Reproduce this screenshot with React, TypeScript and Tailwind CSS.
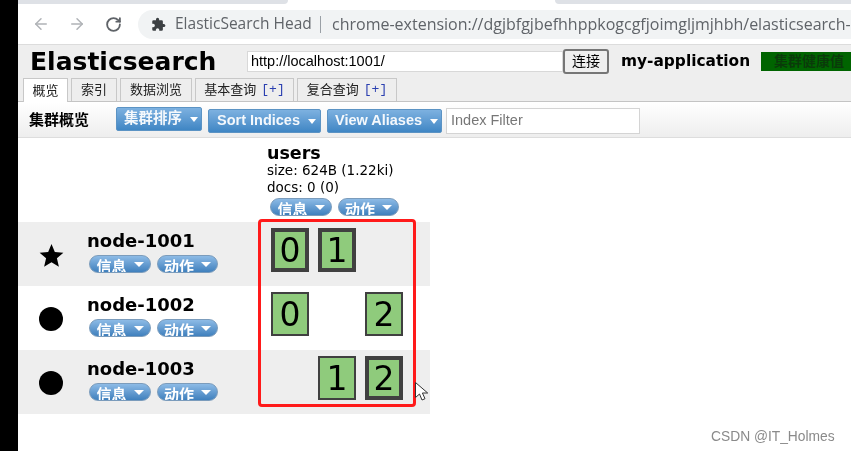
import { ArrowLeft, ArrowRight, RotateCw } from "lucide-react";

const tabs = [
  { label: "概览", w: "w-[45px]", active: true },
  { label: "索引", w: "w-[46px]" },
  { label: "数据浏览", w: "w-[72px]" },
  { label: "基本查询", w: "w-[99px]", plus: true },
  { label: "复合查询", w: "w-[100px]", plus: true },
];

const nodes = [
  { name: "node-1001", icon: "star", shards: [0, 1, null], thick: [0, 1], bg: "bg-[#eeeeee]" },
  { name: "node-1002", icon: "dot", shards: [0, null, 2], thick: [], bg: "bg-white" },
  { name: "node-1003", icon: "dot", shards: [null, 1, 2], thick: [2], bg: "bg-[#eeeeee]" },
];

function ToolButton({ label, w, mt }: { label: string; w: string; mt: string }) {
  return (
    <div className={`${w} ${mt} h-[24px] flex items-center justify-center gap-[8px] pl-[4px] whitespace-nowrap rounded-[2px] border border-[#5b93c4] bg-gradient-to-b from-[#7db1e0] to-[#3f86c4] text-[#f4f8fc] text-[14.5px] font-bold font-['Liberation_Sans','Noto_Sans_CJK_SC',sans-serif]`}>
      <span>{label}</span>
      <span className="border-x-[4px] border-t-[5px] border-x-transparent border-t-white" />
    </div>
  );
}

function Pill({ label, w = "w-[62px]" }: { label: string; w?: string }) {
  return (
    <div className={`${w} h-[18px] overflow-hidden flex items-start justify-center gap-[7px] rounded-full border border-[#7b9cbc] bg-gradient-to-b from-[#8dbbe6] to-[#3f80bd] text-white text-[15px] font-bold leading-[20px]`}>
      <span className="font-['Noto_Sans_CJK_SC',sans-serif]">{label}</span>
      <span className="mt-[6px] border-x-[5px] border-t-[5px] border-x-transparent border-t-white" />
    </div>
  );
}

function Shard({ n, thick }: { n: number | null; thick: boolean }) {
  if (n === null) return <div className="w-[38px]" />;
  return (
    <div className={`w-[38px] h-[44px] flex items-center justify-center bg-[#8fcb7c] border-[#404040] text-black text-[33px] leading-none ${thick ? "border-[4px]" : "border-[2px]"}`}>
      {n}
    </div>
  );
}

export default function App() {
  return (
    <div className="relative w-[851px] h-[451px] overflow-hidden flex bg-white font-['DejaVu_Sans','Noto_Sans_CJK_SC',sans-serif] blur-[0.4px]">
      <div className="w-[18px] bg-black shrink-0" />
      <div className="flex-1 flex flex-col min-w-0">
        {/* browser chrome */}
        <div className="h-[4px] flex shrink-0">
          <div className="w-[270px] bg-[#dee1e6] rounded-br-[6px]" />
          <div className="w-[267px] bg-white" />
          <div className="flex-1 bg-[#dee1e6] rounded-bl-[6px]" />
        </div>
        <div className="h-[41px] shrink-0 flex items-center bg-white border-b border-[#dcdcdc] pl-[14px]">
          <ArrowLeft size={18} className="text-[#b0b3b7]" />
          <ArrowRight size={18} className="text-[#b0b3b7] ml-[18px]" />
          <RotateCw size={17} strokeWidth={2.6} className="text-[#5f6368] ml-[19px]" />
          <div className="ml-[16px] h-[29px] flex-1 flex items-center rounded-l-full bg-[#f1f3f4] pl-[13px] text-[16px] text-[#5f6368] whitespace-nowrap overflow-hidden font-['Open_Sans',sans-serif]">
            <svg width="15" height="15" viewBox="0 0 24 24" className="shrink-0 fill-[#3c4043]">
              <path d="M20.5 11H19V7a2 2 0 0 0-2-2h-4V3.5a2.5 2.5 0 0 0-5 0V5H4a2 2 0 0 0-2 2v3.8h1.5a2.7 2.7 0 0 1 0 5.4H2V20a2 2 0 0 0 2 2h3.8v-1.5a2.7 2.7 0 0 1 5.4 0V22H17a2 2 0 0 0 2-2v-4h1.5a2.5 2.5 0 0 0 0-5z" />
            </svg>
            <span className="ml-[9px] w-[137px] shrink-0 text-[15.5px]">ElasticSearch Head</span>
            <span className="ml-[8px] mr-[11px] w-px h-[17px] shrink-0 bg-[#9aa0a6]" />
            <span className="shrink-0">chrome-extension://dgjbfgjbefhhppkogcgfjoimgljmjhbh/elasticsearch-</span>
          </div>
        </div>

        {/* head header */}
        <div className="h-[57px] shrink-0 flex flex-col bg-[#eeeeee] border-b border-[#c4c4c4]">
          <div className="h-[34px] flex items-center pl-[12px] whitespace-nowrap">
            <span className="w-[217px] text-[25px] font-bold text-black leading-none">Elasticsearch</span>
            <div className="w-[316px] h-[21px] flex items-center bg-white border border-[#d8d8d8] pl-[3px] text-[14.5px] text-black font-['Liberation_Sans',sans-serif]">http://localhost:1001/</div>
            <div className="w-[46px] h-[25px] flex items-center justify-center rounded-[3px] border-2 border-[#767676] bg-[#efefef] text-[14px] text-black">连接</div>
            <span className="ml-[12px] w-[140px] text-[15.4px] font-bold text-black">my-application</span>
            <div className="flex-1 h-[19px] bg-[#006400] pl-[13px] text-[14px] leading-[19px] font-bold text-[#0a3a0a] overflow-hidden">集群健康值</div>
          </div>
          <div className="flex-1 flex items-end gap-[3px] pl-[5px]">
            {tabs.map(t => (
              <div
                key={t.label}
                className={`${t.w} ${t.active ? "h-[24px] bg-white -mb-px" : "h-[23px]"} flex items-center justify-center gap-[5px] border border-b-0 border-[#c8c8c8] text-[13px] text-[#222222] whitespace-nowrap`}
              >
                <span>{t.label}</span>
                {t.plus && <span className="text-[#2a3fb0] font-['Liberation_Mono',monospace]">[+]</span>}
              </div>
            ))}
          </div>
        </div>

        {/* toolbar */}
        <div className="h-[36px] shrink-0 flex items-center bg-gradient-to-b from-white to-[#eeeeee] border-b border-[#dddddd] pl-[11px]">
          <span className="w-[87px] mt-[2px] text-[15px] font-bold text-black">集群概览</span>
          <ToolButton label="集群排序" w="w-[86px]" mt="-mt-[1px]" />
          <div className="w-[6px]" />
          <ToolButton label="Sort Indices" w="w-[113px]" mt="mt-[3px]" />
          <div className="w-[6px]" />
          <ToolButton label="View Aliases" w="w-[115px]" mt="mt-[3px]" />
          <div className="ml-[4px] mt-[3px] w-[194px] h-[26px] flex items-center bg-white border border-[#d4d4d4] pl-[4px] text-[14.5px] text-[#777777] font-['Liberation_Sans',sans-serif]">Index Filter</div>
        </div>

        {/* cluster overview */}
        <div className="w-[412px]">
          <div className="h-[84px] pl-[249px] pt-[5px] text-black">
            <div className="text-[17.5px] font-bold leading-[20px]">users</div>
            <div className="text-[13.5px] leading-[17px] -mt-[1px]">size: 624B (1.22ki)</div>
            <div className="text-[13.5px] leading-[17px]">docs: 0 (0)</div>
            <div className="mt-[2px] flex gap-[6px] ml-[3px]">
              <Pill label="信息" />
              <Pill label="动作" w="w-[61px]" />
            </div>
          </div>
          {nodes.map(n => (
            <div key={n.name} className={`h-[64px] flex ${n.bg}`}>
              <div className="w-[66px] flex items-center justify-center pt-[2px]">
                {n.icon === "star" ? (
                  <svg width="25" height="25" viewBox="0 0 24 24" className="fill-black">
                    <path d="M12 1l3.2 7.6 8.2.7-6.2 5.4 1.9 8.1L12 18.5l-7.1 4.3 1.9-8.1L.6 9.3l8.2-.7z" />
                  </svg>
                ) : (
                  <div className="w-[24px] h-[24px] rounded-full bg-black" />
                )}
              </div>
              <div className="w-[174px] pl-[3px] pt-[9px]">
                <div className="text-[18px] font-bold leading-[20px] text-black">{n.name}</div>
                <div className="mt-[4px] ml-[2px] flex gap-[6px]">
                  <Pill label="信息" />
                  <Pill label="动作" w="w-[61px]" />
                </div>
              </div>
              <div className="flex gap-[9px] pt-[6px] ml-[13px] items-start">
                {n.shards.map((s, i) => (
                  <Shard key={i} n={s} thick={n.thick.includes(i)} />
                ))}
              </div>
            </div>
          ))}
        </div>
      </div>

      {/* screenshot annotation, cursor and watermark sit above the page */}
      <div className="absolute left-[258px] top-[219px] w-[158px] h-[188px] border-[3px] border-[#ff1a1a] rounded-[4px]" />
      <svg width="16" height="22" viewBox="0 0 16 22" className="absolute left-[414px] top-[381px] fill-white stroke-[#333333]">
        <path d="M1.5 1.5v15l4-3.5 2.5 6 3-1.3-2.6-5.7h5.3z" />
      </svg>
      <div className="absolute left-[711px] top-[427px] text-[13.8px] text-[#8a8a8a] font-['Liberation_Sans',sans-serif]">CSDN @IT_Holmes</div>
    </div>
  );
}
